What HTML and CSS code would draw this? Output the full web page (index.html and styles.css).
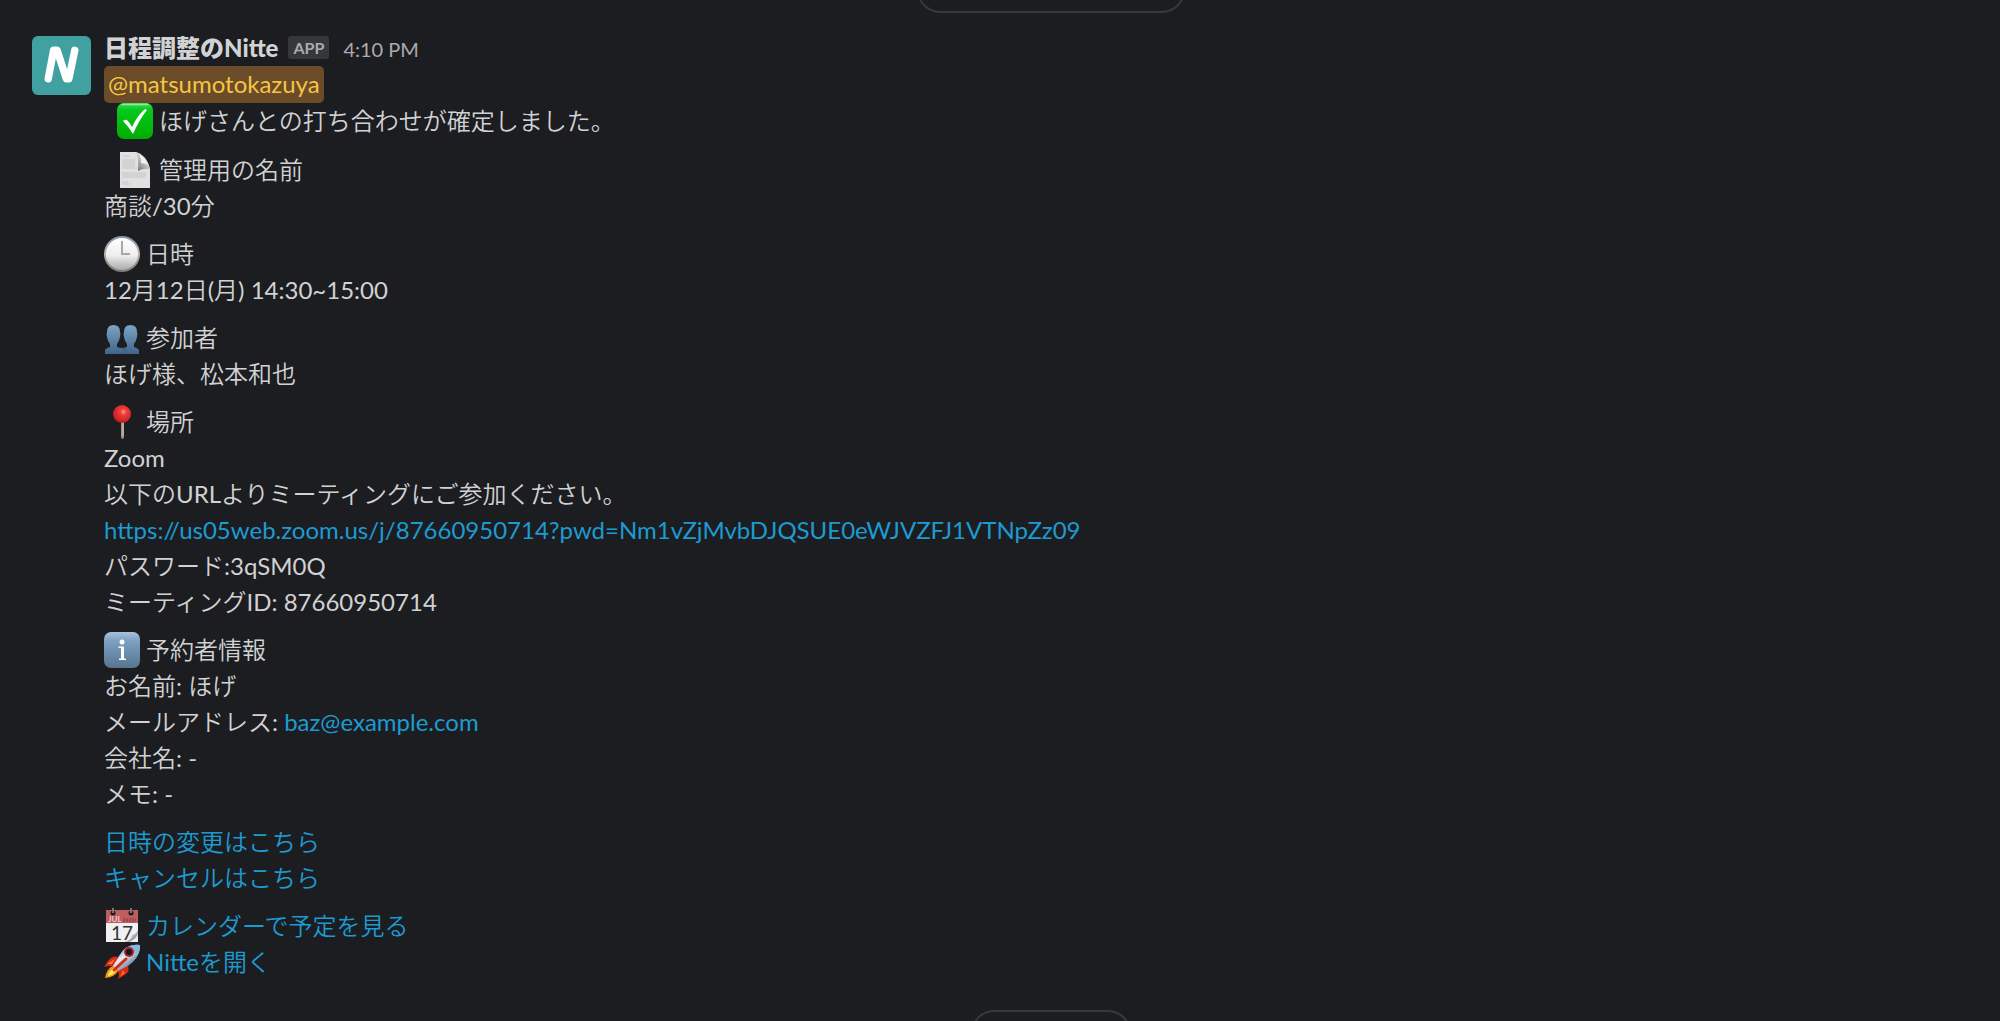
FILE: index.html
```html
<!DOCTYPE html>
<html lang="ja">
<head>
    <meta charset="UTF-8">
    <title>日程調整のNitte</title>
    <link rel="stylesheet" href="styles.css">
</head>
<body>
    <div class="pane">
        <div class="day day-prev"><button type="button" class="pill pill-wide" aria-label="日付"></button></div>
        <div class="message">
            <svg class="avatar" viewBox="0 0 60 60" role="img" aria-label="Nitte">
                <rect width="60" height="60" rx="6" fill="#41a0a0"/>
                <path d="M16.500 43.500 L22 14.500 H25.500 L35 43.500 H37.500 L43.500 14.500" fill="none" stroke="#fff" stroke-width="7.500" stroke-linecap="round" stroke-linejoin="round"/>
            </svg>
            <div class="content">
                <div class="head">
                    <span class="name">日程調整のNitte</span>
                    <span class="badge">APP</span>
                    <span class="time">4:10 PM</span>
                </div>
                <section>
                    <p><a href="#" class="mention">@matsumotokazuya</a></p>
                    <p class="indent">
                        <svg class="emoji" viewBox="0 0 36 36">
                            <defs><linearGradient id="green" x2="0" y2="1"><stop offset="0" stop-color="#3ddc58"/><stop offset=".2" stop-color="#05c91b"/><stop offset="1" stop-color="#00ad00"/></linearGradient></defs>
                            <rect width="36" height="36" rx="7" fill="url(#green)"/>
                            <path d="M5 1.500h26" stroke="#8dec9d" stroke-width="1.500" stroke-linecap="round"/>
                            <path d="M6 18q2-2 4-1 3 3 5 7Q20 13 28 6l2 1Q22 17 16 31q-4-7-10-13z" fill="#fff"/>
                        </svg>ほげさんとの打ち合わせが確定しました。</p>
                </section>
                <section>
                    <p class="indent">
                        <svg class="emoji" viewBox="0 0 36 36">
                            <defs><linearGradient id="fold" x1=".1" y1=".9" x2=".7" y2=".1"><stop offset="0" stop-color="#777"/><stop offset=".5" stop-color="#bbb"/><stop offset="1" stop-color="#f4f4f4"/></linearGradient></defs>
                            <path d="M3 0h16q4 1 8 5t6 12v19H3z" fill="#e1e1e1"/>
                            <path d="M5 4h8M5 8h13M5 10h13M5 12h13M5 14h13M5 16h15M5 21h24M5 23h24M5 25h23M5 30h6M5 32h8" stroke="#c5c5c5" stroke-width="1"/>
                            <path d="M19 0q3 5 2 19 5-3 12-2-2-8-6-12T19 0z" fill="url(#fold)"/>
                            <path d="M22 2q3 5 2 9 4 0 7 2-3-7-9-11z" fill="#f2f2f2"/>
                        </svg>管理用の名前</p>
                    <p>商談/30分</p>
                </section>
                <section>
                    <p>
                        <svg class="emoji" viewBox="0 0 36 36">
                            <defs>
                                <linearGradient id="face" x2="0" y2="1"><stop offset="0" stop-color="#fff"/><stop offset=".55" stop-color="#eee"/><stop offset="1" stop-color="#aaa"/></linearGradient>
                                <linearGradient id="rim" x2="0" y2="1"><stop offset="0" stop-color="#7f95ae"/><stop offset=".5" stop-color="#c3b5aa"/><stop offset="1" stop-color="#77797c"/></linearGradient>
                            </defs>
                            <circle cx="18" cy="18" r="18" fill="url(#rim)"/>
                            <circle cx="18" cy="18" r="16" fill="url(#face)"/>
                            <path d="M18 5v13h8" fill="none" stroke="#a8a8a8" stroke-width="2"/>
                        </svg>日時</p>
                    <p>12月12日(月) 14:30~15:00</p>
                </section>
                <section>
                    <p>
                        <svg class="emoji" viewBox="0 0 36 36">
                            <defs><linearGradient id="people" gradientUnits="userSpaceOnUse" x1="0" y1="5" x2="0" y2="34"><stop offset="0" stop-color="#7da3c4"/><stop offset="1" stop-color="#3f658c"/></linearGradient></defs>
                            <g fill="url(#people)">
                                <path d="M9.500 5Q16 5 16 12q1 2 0 5-1 5-3 7v4H6v-4q-2-2-3-7-1-3 0-5 0-7 6.500-7z"/>
                                <path d="M26.500 5Q33 5 33 12q1 2 0 5-1 5-3 7v4h-7v-4q-2-2-3-7-1-3 0-5 0-7 6.500-7z"/>
                                <path d="M1 34v-4q1-2 5-3h7q3 1 5 1t5-1h7q4 1 5 3v4z"/>
                            </g>
                            <path d="M18 28q4 1 5 5" fill="none" stroke="#38597c" stroke-width="1"/>
                        </svg>参加者</p>
                    <p>ほげ様、松本和也</p>
                </section>
                <section>
                    <p>
                        <svg class="emoji" viewBox="0 0 36 36">
                            <defs><radialGradient id="pin" cx=".58" cy=".38" r=".6"><stop offset="0" stop-color="#ff9a84"/><stop offset=".3" stop-color="#ef3e39"/><stop offset="1" stop-color="#c51c22"/></radialGradient></defs>
                            <path d="M17 17h3v16l-1 2h-1l-1-2z" fill="#a58f83"/>
                            <path d="M19 18v14" stroke="#d3c1b5" stroke-width="1"/>
                            <circle cx="18" cy="10" r="9" fill="url(#pin)"/>
                        </svg>場所</p>
                    <p>Zoom</p>
                    <p>以下のURLよりミーティングにご参加ください。</p>
                    <p><a href="#">https://us05web.zoom.us/j/87660950714?pwd=Nm1vZjMvbDJQSUE0eWJVZFJ1VTNpZz09</a></p>
                    <p>パスワード:3qSM0Q</p>
                    <p>ミーティングID: 87660950714</p>
                </section>
                <section>
                    <p>
                        <svg class="emoji" viewBox="0 0 36 36">
                            <defs><linearGradient id="info" x2="0" y2="1"><stop offset="0" stop-color="#a9c3dc"/><stop offset=".25" stop-color="#7ca0c3"/><stop offset="1" stop-color="#56758f"/></linearGradient></defs>
                            <rect width="36" height="36" rx="7" fill="url(#info)"/>
                            <circle cx="18" cy="10" r="2.500" fill="#fff"/>
                            <path d="M14.500 14.500H20v12h2V28h-7v-1.500h2V16h-2.500z" fill="#fff"/>
                        </svg>予約者情報</p>
                    <p>お名前: ほげ</p>
                    <p>メールアドレス: <a href="#">baz@example.com</a></p>
                    <p>会社名: -</p>
                    <p>メモ: -</p>
                </section>
                <section>
                    <p><a href="#">日時の変更はこちら</a></p>
                    <p><a href="#">キャンセルはこちら</a></p>
                </section>
                <section>
                    <p><a href="#">
                        <svg class="emoji" viewBox="0 0 36 36">
                            <defs><linearGradient id="curl" x1=".2" y1=".2" x2=".8" y2=".8"><stop offset="0" stop-color="#777"/><stop offset=".4" stop-color="#ddd"/><stop offset="1" stop-color="#888"/></linearGradient></defs>
                            <path d="M2 2h32v22l-9 10H2z" fill="#f1f1f1"/>
                            <path d="M2 2h32v13H2z" fill="#bd5f61"/>
                            <path d="M19 12h13" stroke="#a5484c" stroke-width="4" stroke-dasharray="2 1"/>
                            <text x="4" y="14" class="cal-month">JUL</text>
                            <path d="M34 21v13H20q8-2 8-7 5-1 6-6z" fill="url(#curl)"/>
                            <path d="M34 26v8h-9q6-2 9-8z" fill="#eee"/>
                            <text x="7" y="32" class="cal-day">17</text>
                            <circle cx="9" cy="5" r="2.500" fill="#1b1c20"/><circle cx="27" cy="5" r="2.500" fill="#1b1c20"/>
                            <path d="M9 0v5M27 0v5" stroke="#777" stroke-width="2"/>
                        </svg>カレンダーで予定を見る</a></p>
                    <p><a href="#">
                        <svg class="emoji" viewBox="0 0 36 36">
                            <defs><linearGradient id="hull" x1=".2" y1=".2" x2=".7" y2=".8"><stop offset="0" stop-color="#5e9dd2"/><stop offset=".4" stop-color="#e8edf0"/><stop offset=".7" stop-color="#aab4bb"/><stop offset="1" stop-color="#4781bc"/></linearGradient></defs>
                            <path d="M14 13Q8 11 4 17L0 23q6-2 10 0z" fill="#d92a14"/>
                            <path d="M3 20l8-5-3 5z" fill="#ff7435"/>
                            <path d="M24 22q2 5-2 8l-8 5q2-6-1-9z" fill="#d92a14"/>
                            <path d="M19 26l-3 7 5-4z" fill="#ff6426"/>
                            <path d="M9 22q-6 2-8 12 10-1 13-7z" fill="#ff9410"/>
                            <path d="M10 24q-5 3-6 8 6-1 8-6z" fill="#ffed62"/>
                            <path d="M36 1Q22-1 15 12L9 22l5 5 10-5Q37 13 36 1z" fill="url(#hull)"/>
                            <path d="M36 1q-7-1-12 2l9 8q3-4 3-10z" fill="#86b8df"/>
                            <circle cx="25" cy="8" r="5" fill="#aa2026"/><circle cx="25" cy="8" r="3" fill="#18171c"/>
                            <path d="M22 15L10 26" stroke="#d12b20" stroke-width="3" stroke-linecap="round"/>
                        </svg>Nitteを開く</a></p>
                </section>
            </div>
        </div>
        <div class="day day-next"><button type="button" class="pill" aria-label="日付"></button></div>
    </div>
</body>
</html>
```
FILE: styles.css
```css
*{margin: 0;padding: 0;box-sizing: border-box;}
body{background: #1c1d21;color: #d1d2d3;font-size: 24px;line-height: 36px;font-family: Lato, "Noto Sans CJK JP DemiLight", "Noto Sans CJK JP Light", "Noto Sans CJK JP", sans-serif;}
a{color: #1d9bd1;text-decoration: none;}
a:hover{text-decoration: underline;}

.pane{display: flex;flex-direction: column;height: 100vh;overflow: hidden;}

/* date pills, cut off by the scroll edge */
.day{display: flex;justify-content: center;padding-left: 101px;overflow: hidden;}
.day-prev{height: 13px;flex: none;align-items: flex-end;}
.day-next{height: 11px;flex: none;align-items: flex-start;margin-top: auto;}
.pill{flex: none;width: 160px;height: 46px;border: 2px solid #38393d;border-radius: 23px;background: none;}
.pill-wide{width: 268px;}

.message{display: flex;gap: 13px;padding: 17px 32px 0;}
.avatar{flex: none;width: 59px;height: 59px;margin-top: 6px;}
.content{flex: 1;min-width: 0;}

.head{display: flex;align-items: baseline;gap: 10px;height: 36px;}
.name{font-family: Lato, "Noto Sans CJK JP", sans-serif;font-weight: 900;}
.badge{align-self: flex-start;margin-top: 6px;background: #35373b;color: #ababad;font-size: 16px;font-weight: 700;line-height: 23px;padding: 0 5px;border-radius: 3px;}
.time{color: #ababad;font-size: 20px;margin-left: 4px;}

section{margin-bottom: 12px;}
.head + section{margin-bottom: 13px;}
.indent{padding-left: 13px;}
.mention{display: block;width: fit-content;background: #6c4b29;color: #f2c744;padding: 0 4px 1px;border-radius: 5px;}
.emoji{width: 36px;height: 36px;vertical-align: top;margin-right: 6px;}
.cal-month{font: 700 8px Lato, sans-serif;fill: #eec9c9;}
.cal-day{font: 400 19px Lato, sans-serif;fill: #333;}
```
